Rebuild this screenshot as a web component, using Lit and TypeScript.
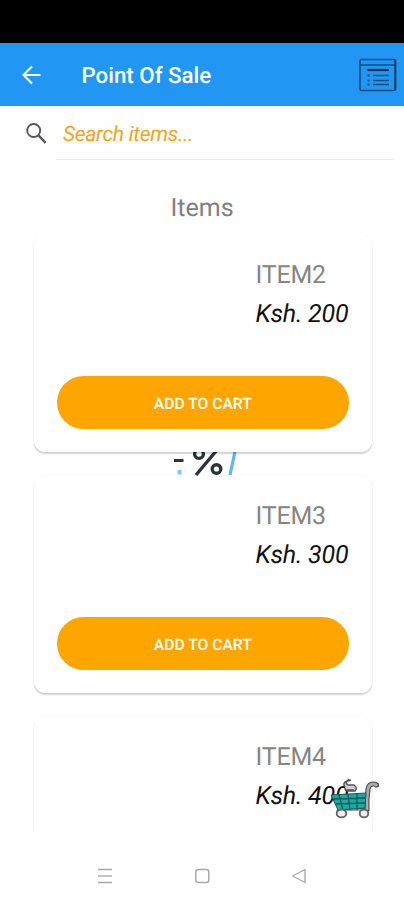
import { LitElement, html, svg, css } from "lit";
import { customElement, property } from "lit/decorators.js";

@customElement("item-card")
class ItemCard extends LitElement {
  @property() name = "";
  @property() price = "";

  static styles = css`
    :host {
      display: flex;
      flex-direction: column;
      flex: none;
      box-sizing: border-box;
      height: 217px;
      padding: 25px 23px 23px 22.5px;
      border-radius: 11px;
      background: #fff;
      box-shadow: 0 1.5px 1.5px rgba(0, 0, 0, 0.15), 0 1px 2px rgba(0, 0, 0, 0.06);
    }
    .info {
      width: 93.5px;
      margin-left: auto;
      flex: 1;
      white-space: nowrap;
      font-size: 25px;
      line-height: 32px;
      text-rendering: geometricPrecision;
    }
    .name { color: #858585; letter-spacing: -0.2px; }
    .price { color: #111; font-style: italic; margin-top: 7px; letter-spacing: -0.2px; }
    button {
      height: 53px;
      border: 0;
      border-radius: 27px;
      background: #ffa500;
      color: #fff;
      padding: 2px 0 0 0;
      font: 500 15.7px Roboto, sans-serif;
      text-rendering: geometricPrecision;
    }
  `;

  render() {
    return html`
      <div class="info">
        <div class="name">${this.name}</div>
        <div class="price">${this.price}</div>
      </div>
      <button>ADD TO CART</button>
    `;
  }
}

@customElement("app-root")
class AppRoot extends LitElement {
  items = [
    { name: "ITEM2", price: "Ksh. 200" },
    { name: "ITEM3", price: "Ksh. 300" },
    { name: "ITEM4", price: "Ksh. 400" },
  ];

  static styles = css`
    :host {
      display: flex;
      flex-direction: column;
      height: 900px;
      overflow: hidden;
      background: #fefefe;
      font-family: Roboto, sans-serif;
      text-rendering: geometricPrecision;
    }
    svg { display: block; flex: none; }
    .status { height: 43px; background: #000; flex: none; }
    header {
      display: flex;
      align-items: center;
      box-sizing: border-box;
      height: 63px;
      flex: none;
      padding: 1px 7px 0 21px;
      background: #2196f3;
      color: #fff;
    }
    h1 {
      flex: 1;
      margin: 2px 0 0 40.5px;
      font-size: 22.3px;
      font-weight: 500;
      letter-spacing: 0;
    }
    .search {
      display: flex;
      align-items: center;
      height: 54px;
      flex: none;
      padding: 0 10px 0 25px;
    }
    .field {
      flex: 1;
      box-sizing: border-box;
      height: 54px;
      margin-left: 9px;
      padding-left: 7px;
      border-bottom: 1px solid #ececec;
      color: #f5a31a;
      font-size: 21px;
      font-style: italic;
      line-height: 58px;
      letter-spacing: -0.3px;
    }
    h2 {
      flex: none;
      margin: 32px 0 10px;
      text-align: center;
      color: #808080;
      font-size: 25px;
      font-weight: 400;
      line-height: 33px;
      letter-spacing: 0;
    }
    .viewport {
      position: relative;
      height: 595px;
      flex: none;
      overflow: hidden;
    }
    .list {
      position: relative;
      display: flex;
      flex-direction: column;
      gap: 24px;
      padding: 0 32px 0 34px;
    }
    .watermark { position: absolute; left: 165px; top: 208px; }
    .cart { position: absolute; right: 25px; bottom: 10px; }
    nav {
      flex: none;
      height: 48px;
      margin-top: 22px;
      display: flex;
      justify-content: center;
      align-items: flex-start;
      box-sizing: border-box;
      padding: 16px 0 0;
      gap: 81px;
    }
  `;

  watermark() {
    return svg`
      <svg class="watermark" width="80" height="36" viewBox="0 0 80 36">
        <rect x="9" y="16" width="9.500" height="3" fill="#2c3340"/>
        <rect x="12.500" y="27" width="4" height="4.500" rx="1" fill="#7cc6fa"/>
        <g fill="none" stroke="#2c3340" stroke-width="3.400">
          <circle cx="34" cy="11" r="4.400"/>
          <path d="M52 7 31 32"/>
          <circle cx="51.500" cy="26" r="4.300"/>
        </g>
        <path d="M70.500 6 65 32" stroke="#62b5f8" stroke-width="3.200"/>
      </svg>`;
  }

  cart() {
    return svg`
      <svg class="cart" width="50" height="42" viewBox="0 0 50 42">
        <path d="M16 9q-3-4 2-6l4-1M20 1q-5 4-1 6l6 0q4 3 1 6h-6q-4 0-4-3M17 12h8" fill="#d0d0d0" stroke="#555" stroke-width="1.500"/>
        <path d="M9 34 11 31H36" fill="none" stroke="#555" stroke-width="4"/>
        <path d="M10 32H36" stroke="#aaa" stroke-width="1.700"/>
        <path d="M38 33V22L39 11Q40 6 44 6Q48 6 49 9" fill="none" stroke="#484b4b" stroke-width="5"/>
        <path d="M38 32V22L39 11Q40 6 44 6Q47 6 48 8" fill="none" stroke="#aaa" stroke-width="2.800"/>
        <path d="M2 17 37 15 36 30 9 32Z" fill="#19aaa4" stroke="#175a56" stroke-width="1"/>
        <path d="M4 21 36 20M7 26 36 25M10 17 14 32M19 16 21 32M28 16 28 32" fill="none" stroke="#175b57" stroke-width="1.300"/>
        <g fill="#eee" stroke="#666" stroke-width="1.900">
          <ellipse cx="12.500" cy="35.500" rx="4.800" ry="3.900"/>
          <ellipse cx="35" cy="35.500" rx="4.300" ry="3.900"/>
        </g>
      </svg>`;
  }

  render() {
    return html`
      <div class="status"></div>
      <header>
        <svg width="20" height="20" viewBox="0 0 20 20" fill="none" stroke="#fff" stroke-width="2.100">
          <path d="M19.500 10H2.500M11 1.500 2.500 10 11 18.500"/>
        </svg>
        <h1>Point Of Sale</h1>
        <svg width="38" height="34" viewBox="0 0 38 34" fill="none" stroke="#124d80">
          <rect x="1" y="1.500" width="35.500" height="31" rx="1.500" stroke-width="1.600"/>
          <path d="M1 7H36.500" stroke-width="1.500"/>
          <path d="M36.300 2.500V32" stroke="#0b2c4a" stroke-width="1.600"/>
          <path d="M8.500 12H30" stroke="#0b2c4a" stroke-width="2.200"/>
          <path d="M14 17.500H30M14 22.500H30M14 26.500H30" stroke-width="1.700"/>
          <path d="M8.500 17.500h2M8.500 22.500h2M8.500 26.500h2" stroke-width="1.900"/>
        </svg>
      </header>
      <div class="search">
        <svg width="22" height="22" viewBox="0 0 22 22" fill="none" stroke="#595959">
          <circle cx="8.700" cy="8.500" r="6.500" stroke-width="1.900"/>
          <path d="M13.200 13.200 20.600 20.800" stroke-width="2.400"/>
        </svg>
        <div class="field">Search items...</div>
      </div>
      <h2>Items</h2>
      <div class="viewport">
        ${this.watermark()}
        <div class="list">
          ${this.items.map((i) => html`<item-card .name=${i.name} .price=${i.price}></item-card>`)}
        </div>
        ${this.cart()}
      </div>
      <nav>
        <svg width="16" height="16" viewBox="0 0 16 16" stroke="#aaa" stroke-width="1.400">
          <path d="M1 1.500H15M1 14.500H15"/>
          <path d="M1 8H15" stroke="#c4c4c4" stroke-width="2"/>
        </svg>
        <svg width="16" height="16" viewBox="0 0 16 16" fill="none" stroke="#aaa" stroke-width="1.500">
          <rect x="1.800" y="1.500" width="13" height="13" rx="2.500"/>
        </svg>
        <svg width="16" height="16" viewBox="0 0 16 16" fill="none" stroke="#aaa" stroke-width="1.400" stroke-linejoin="round">
          <path d="M14 1.500V14.500L1.500 8Z"/>
        </svg>
      </nav>
    `;
  }
}
